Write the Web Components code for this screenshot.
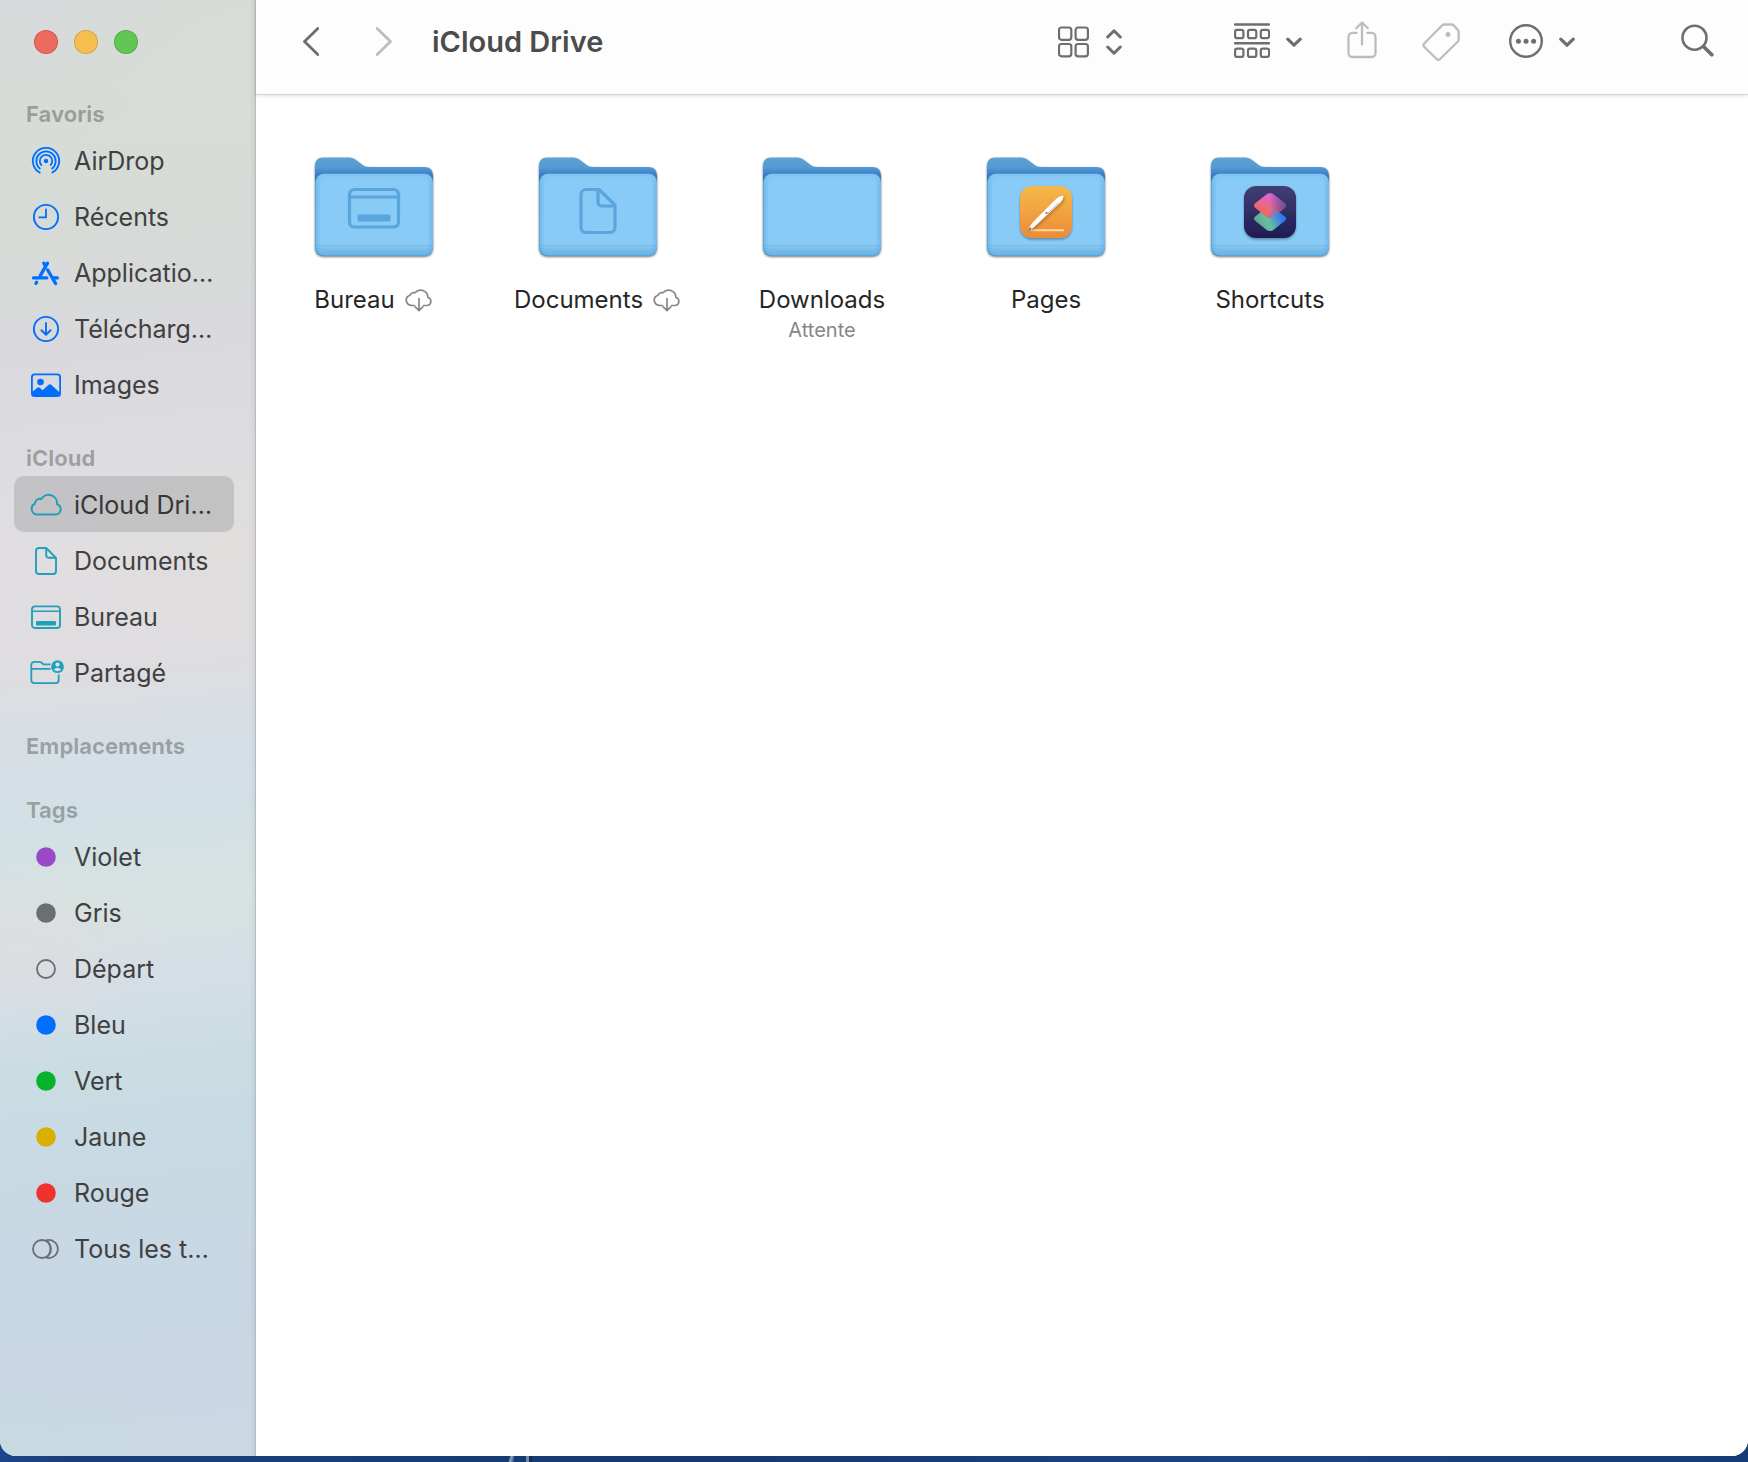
<!DOCTYPE html>
<html lang="fr">
<head>
<meta charset="utf-8">
<title>iCloud Drive</title>
<style>
  html, body { margin: 0; height: 100%; }
  body {
    font-family: Inter, "Liberation Sans", sans-serif;
    background:
      linear-gradient(105deg, transparent 20%, #8fa9bd 45%, #5d7fa3 70%, transparent) 508px 100% / 6px 6px no-repeat,
      linear-gradient(90deg, #6f8dab 0 50%, #122c52 50%) 526px 100% / 6px 6px no-repeat,
      linear-gradient(90deg, #1c468c 0, #1a3e78 4%, #17407a 15%, #16386e 40%, #1a4482 70%, #153c74 100%);
  }
</style>
</head>
<body>
<finder-window>
  <finder-sidebar slot="sidebar">
    <sidebar-section heading="Favoris">
      <sidebar-item icon="airdrop">AirDrop</sidebar-item>
      <sidebar-item icon="clock">Récents</sidebar-item>
      <sidebar-item icon="apps">Applicatio…</sidebar-item>
      <sidebar-item icon="download">Télécharg…</sidebar-item>
      <sidebar-item icon="image">Images</sidebar-item>
    </sidebar-section>
    <sidebar-section heading="iCloud">
      <sidebar-item icon="cloud" selected>iCloud Dri…</sidebar-item>
      <sidebar-item icon="doc">Documents</sidebar-item>
      <sidebar-item icon="desktop">Bureau</sidebar-item>
      <sidebar-item icon="shared">Partagé</sidebar-item>
    </sidebar-section>
    <sidebar-section heading="Emplacements"></sidebar-section>
    <sidebar-section heading="Tags">
      <sidebar-item icon="dot" style="--tint:#9a48c8">Violet</sidebar-item>
      <sidebar-item icon="dot" style="--tint:#6b6e75">Gris</sidebar-item>
      <sidebar-item icon="ring">Départ</sidebar-item>
      <sidebar-item icon="dot" style="--tint:#006fff">Bleu</sidebar-item>
      <sidebar-item icon="dot" style="--tint:#07b22d">Vert</sidebar-item>
      <sidebar-item icon="dot" style="--tint:#dab000">Jaune</sidebar-item>
      <sidebar-item icon="dot" style="--tint:#f0312d">Rouge</sidebar-item>
      <sidebar-item icon="alltags">Tous les t…</sidebar-item>
    </sidebar-section>
  </finder-sidebar>
  <finder-toolbar slot="toolbar">iCloud Drive</finder-toolbar>
  <finder-grid slot="content">
    <finder-file emblem="desktop" cloud>Bureau</finder-file>
    <finder-file emblem="doc" cloud>Documents</finder-file>
    <finder-file status="Attente">Downloads</finder-file>
    <finder-file emblem="pages">Pages</finder-file>
    <finder-file emblem="shortcuts">Shortcuts</finder-file>
  </finder-grid>
</finder-window>

<script>
const svg = (w, h, body, attrs = '') =>
  `<svg width="${w}" height="${h}" viewBox="0 0 ${w} ${h}" fill="none" stroke-linecap="round" stroke-linejoin="round" aria-hidden="true" ${attrs}>${body}</svg>`;

const BLUE = '#006fff', TEAL = '#229fb9', GREY = '#6b6e75';

/* Sidebar glyphs, drawn on a 36x32 board centred on (18,16). */
const side = {
  airdrop: `<g stroke="${BLUE}" stroke-width="1.8" stroke-linecap="butt">
    <path d="M12.4 28A13.2 13.2 0 1 1 23.6 28"/>
    <path d="M12.4 24A9.7 9.7 0 1 1 23.6 24"/>
    <path d="M13.8 20.6A6.2 6.2 0 1 1 22.2 20.6"/></g>
    <circle cx="18" cy="16" r="2.2" fill="${BLUE}"/>`,
  clock: `<circle cx="18" cy="16" r="12.1" stroke="${BLUE}" stroke-width="1.9"/><path d="M18 8.5V16.4H11.2" stroke="${BLUE}" stroke-width="1.8"/>`,
  apps: `<g stroke="${BLUE}" stroke-width="3.3">
    <path d="M19.5 6.2 12.3 18.6"/><path d="M15.8 6.2 17.4 8.8"/>
    <path d="M5.5 20.9H18.8"/><path d="M25.3 20.9H29.4"/>
    <path d="M19.7 13 27.6 26.5"/><path d="M8.6 25.3 7.9 26.4"/></g>`,
  download: `<circle cx="18" cy="16" r="12.1" stroke="${BLUE}" stroke-width="1.9"/><path d="M18 10V21.6M13.4 17.3 18 21.8 22.6 17.3" stroke="${BLUE}" stroke-width="1.9"/>`,
  image: `<path fill="${BLUE}" fill-rule="evenodd" d="M6.5 4.5h23a3.5 3.5 0 0 1 3.5 3.5v16.5a3.5 3.5 0 0 1-3.5 3.5h-23a3.5 3.5 0 0 1-3.5-3.5V8a3.5 3.5 0 0 1 3.5-3.5ZM7 6.3A2.2 2.2 0 0 0 4.8 8.5V22.5L9.3 18.7Q10.5 17.7 11.7 18.7L14.6 21.2 20.3 16Q21.9 14.7 23.5 16L31.2 23V8.5A2.2 2.2 0 0 0 29 6.3Z"/><circle cx="12.5" cy="13" r="3.3" fill="${BLUE}"/>`,
  cloud: `<path d="M8.800 25.500A5.700 5.700 0 0 1 6.900 14.700 5 5 0 0 1 13.200 10 8.500 8.500 0 0 1 29 15.200 5.300 5.300 0 0 1 28 25.500Z" stroke="${TEAL}" stroke-width="2"/>`,
  doc: `<path d="M18.2 3H11a3 3 0 0 0-3 3V26a3 3 0 0 0 3 3H25a3 3 0 0 0 3-3V12.8ZM18.2 3.2V10.3a2.5 2.5 0 0 0 2.5 2.5H27.8" stroke="${TEAL}" stroke-width="1.9"/>`,
  desktop: `<rect x="4" y="5.4" width="28" height="21.6" rx="3" stroke="${TEAL}" stroke-width="1.9"/><path d="M4 10.3H32" stroke="${TEAL}" stroke-width="1.5"/><rect x="8" y="20" width="20" height="4.4" rx="1.2" fill="${TEAL}"/>`,
  shared: `<path d="M22.5 7.3H15.4L13.3 5.5Q12.5 4.8 11.4 4.8H6.5A3.2 3.2 0 0 0 3.3 8V23a3.2 3.2 0 0 0 3.2 3.2H27.500A3.2 3.2 0 0 0 30.7 23V17.600M3.3 11.8H22.5" stroke="${TEAL}" stroke-width="1.8" stroke-linecap="butt"/><circle cx="29.5" cy="9.7" r="6.4" fill="${TEAL}"/><circle cx="29.5" cy="7.6" r="2.1" fill="#dfe2e4"/><path d="M25.7 12.8Q29.5 8.8 33.3 12.8Q29.5 15.6 25.7 12.8Z" fill="#dfe2e4"/>`,
  dot: `<circle cx="18" cy="16" r="9.8" style="fill:var(--tint)"/>`,
  ring: `<circle cx="18" cy="16" r="9" stroke="${GREY}" stroke-width="1.8"/>`,
  alltags: `<circle cx="14" cy="16" r="9" stroke="${GREY}" stroke-width="1.8"/><path d="M18.5 7.3A9 9 0 1 1 18.5 24.7A11.6 11.6 0 0 0 18.5 7.3" stroke="${GREY}" stroke-width="1.8"/>`
};

/* Toolbar glyphs */
const D = '#6e6e6e', L = '#bdbdbd';
const sq = (x, y, s, r, w) => `<rect x="${x}" y="${y}" width="${s}" height="${s}" rx="${r}" stroke="${D}" stroke-width="${w}"/>`;
const bar = {
  back: svg(16, 44, `<path d="M14.8 8.5 1.5 21.5 14.8 34.5" stroke="${D}" stroke-width="2.8"/>`),
  forward: svg(16, 44, `<path d="M1.2 8.5 14.5 21.5 1.2 34.5" stroke="${L}" stroke-width="2.8"/>`),
  icons: svg(32, 44, sq(1, 7.5, 12.3, 2.5, 2.2) + sq(17.6, 7.5, 12.3, 2.5, 2.2) + sq(1, 24, 12.3, 2.5, 2.2) + sq(17.6, 24, 12.3, 2.5, 2.2)),
  updown: svg(16, 44, `<path d="M1.7 17 8 10.8 14.3 17M1.7 27 8 33.2 14.3 27" stroke="${D}" stroke-width="3"/>`),
  group: svg(36, 44, `<path d="M1 4.500H35M1 23.300H35" stroke="${D}" stroke-width="2.4"/>` +
    [1.1, 14, 26.8].map(x => sq(x, 9.9, 8.3, 2, 2.2) + sq(x, 28.6, 8.3, 2, 2.2)).join('')),
  chevron: svg(16, 44, `<path d="M1.8 19.2 8 25.2 14.2 19.2" stroke="${D}" stroke-width="3.2"/>`),
  share: svg(30, 44, `<path d="M9.5 12.8H5.5A4 4 0 0 0 1.5 16.8V33A4 4 0 0 0 5.5 37H24.500A4 4 0 0 0 28.5 33V16.8A4 4 0 0 0 24.5 12.8H20.5M15 24.500V3M9.2 8.3 15 2.5 20.8 8.3" stroke="${L}" stroke-width="2.3"/>`),
  tag: svg(38, 44, `<path d="M20 5.500Q21 4.500 22.3 4.500H29.500Q30.8 4.500 31.7 5.4L35.6 9.6Q36.6 10.500 36.6 11.8V19.500Q36.6 20.8 35.7 21.7L18.3 38.800Q16.3 40.600 14.3 38.800L2.4 27Q.6 25.2 2.4 23.2Z" stroke="${L}" stroke-width="2.3"/><circle cx="26" cy="14.5" r="2.5" fill="${L}"/>`),
  more: svg(34, 44, `<circle cx="17" cy="21" r="15.8" stroke="${D}" stroke-width="2.4"/><g fill="${D}"><circle cx="9.4" cy="21.2" r="2.5"/><circle cx="17" cy="21.2" r="2.5"/><circle cx="24.6" cy="21.2" r="2.5"/></g>`),
  search: svg(33, 44, `<circle cx="13.5" cy="17.7" r="12" stroke="${D}" stroke-width="2.6"/><path d="M22.5 26.5 30.8 34.8" stroke="${D}" stroke-width="3.7"/>`)
};

/* Folder emblems, in the folder's own 126x108 board (folder body spans x 4-122). */
const emblem = {
  desktop: `<g stroke="#5ba5de" fill="none"><rect x="38.5" y="36.500" width="49" height="37.500" rx="5" stroke-width="3.2"/><path d="M38 44H88" stroke-width="3"/></g><rect x="46.5" y="61.500" width="33" height="7" rx="1.5" fill="#5ba5de"/>`,
  doc: `<path d="M64 36.500H51a5 5 0 0 0-5 5V74.500a5 5 0 0 0 5 5H75a5 5 0 0 0 5-5V52ZM63 37.500V49.500a3.500 3.500 0 0 0 3.500 3.500H79" fill="none" stroke="#5ba5de" stroke-width="3.2"/>`,
  pages: `<defs><linearGradient id="or" x2="0" y2="1"><stop stop-color="#f5b94a"/><stop offset="1" stop-color="#ee8b38"/></linearGradient></defs>
    <rect x="37" y="33" width="52" height="52" rx="12" fill="url(#or)" filter="url(#lift)"/>
    <path d="M47 77.3H81" stroke="#fbd9a0" stroke-width="2" stroke-linecap="butt"/>
    <path d="M45 77.6C46 73.500 49.500 69.500 54 65L72.5 46.500C75.5 43.500 79 42 80 43 81 44 79.500 47.500 76.5 50.300L57 68.500C52.5 73 49 76 45 77.6Z" fill="#fff" filter="url(#pen)"/>
    <path d="M44.800 77.900 47 74.200 48.500 75.700Z" fill="#55504a"/><circle cx="63.500" cy="60" r="1.1" fill="#777"/><path d="M64.5 60.5 75.5 49.8" stroke="#bbb" stroke-width="1"/>`,
  shortcuts: `<defs><linearGradient id="nv" x2="0" y2="1"><stop stop-color="#403f73"/><stop offset="1" stop-color="#201c54"/></linearGradient>
    <linearGradient id="lo" x1="0" y1=".7" x2="1" y2=".4"><stop stop-color="#5f9f98"/><stop offset=".45" stop-color="#66c09c"/><stop offset=".85" stop-color="#3478f6"/></linearGradient>
    <linearGradient id="up" x1=".2" y1=".75" x2=".6" y2=".1"><stop stop-color="#f0685a"/><stop offset=".55" stop-color="#e4689c"/><stop offset="1" stop-color="#d964d0"/></linearGradient>
    <linearGradient id="ur" x1=".5" y1="0" x2="1" y2="0"><stop stop-color="#4a4478" stop-opacity="0"/><stop offset="1" stop-color="#5b4a86" stop-opacity=".9"/></linearGradient></defs>
    <rect x="37" y="33" width="52" height="52" rx="12" fill="url(#nv)" filter="url(#lift)"/>
    <path d="M59 55Q63 51.800 67 55L77.5 63.200Q80.5 65.600 77.5 68L67 76.500Q63 79.700 59 76.500L48.5 68Q45.5 65.600 48.5 63.200Z" fill="url(#lo)"/>
    <path d="M59 41.700Q63 38.500 67 41.700L77.5 50Q80.5 52.500 77.5 55L67 63.500Q63 66.700 59 63.500L48.5 55Q45.5 52.500 48.5 50Z" fill="url(#up)"/>
    <path d="M59 41.700Q63 38.500 67 41.700L77.5 50Q80.5 52.500 77.5 55L67 63.500Q63 66.700 59 63.500L48.5 55Q45.5 52.500 48.5 50Z" fill="url(#ur)"/>
    <path d="M72 59.400 67 63.500Q63 66.700 60.500 64.500L66 56.500Z" fill="#6f86dc" opacity=".6"/>`
};

const folder = kind => svg(126, 108, `
  <defs>
    <linearGradient id="bk" x2="0" y2="1"><stop stop-color="#5ca2d6"/><stop offset=".1" stop-color="#549bd3"/><stop offset=".2" stop-color="#2e76c2"/><stop offset="1" stop-color="#3a80c8"/></linearGradient>
    <linearGradient id="fr" x2="0" y2="1"><stop stop-color="#7fc4f1"/><stop offset=".08" stop-color="#88cbf6"/><stop offset=".86" stop-color="#88cbf6"/><stop offset=".875" stop-color="#78bdec"/><stop offset=".89" stop-color="#83c6f2"/><stop offset=".92" stop-color="#79beec"/><stop offset="1" stop-color="#67b0e2"/></linearGradient>
    <linearGradient id="ed" x2="1" y2="0"><stop stop-color="#5da9de" stop-opacity=".55"/><stop offset=".05" stop-color="#5da9de" stop-opacity="0"/><stop offset=".95" stop-color="#5da9de" stop-opacity="0"/><stop offset="1" stop-color="#5da9de" stop-opacity=".55"/></linearGradient>
    <filter id="drop" x="-10%" y="-10%" width="120%" height="125%"><feDropShadow dx="0" dy="1" stdDeviation="1.2" flood-color="#000" flood-opacity=".55"/></filter>
    <filter id="lift" x="-20%" y="-20%" width="140%" height="150%"><feDropShadow dx="0" dy="1.5" stdDeviation="1" flood-color="#20405c" flood-opacity=".5"/></filter>
    <filter id="pen" x="-20%" y="-20%" width="150%" height="150%"><feDropShadow dx="1.5" dy="1.5" stdDeviation="1.5" flood-color="#8a4a10" flood-opacity=".5"/></filter>
  </defs>
  <path filter="url(#drop)" fill="url(#bk)" d="M12 4.500H38C41 4.500 43 5.500 45 7L51 11.500C53 13.200 55 14 58 14H113.500Q122 14 122 23V94Q122 103 113 103H13Q4 103 4 94V13Q4 4.500 12 4.500Z"/>
  <rect x="4.5" y="20.8" width="117.5" height="82" rx="8.5" fill="url(#fr)"/>
  <rect x="4.5" y="20.8" width="117.5" height="82" rx="8.5" fill="url(#ed)"/>
  ${emblem[kind] || ''}`);

const cloudDown = svg(30, 24, `<path d="M10.5 17.500H8.500A6 5.3 0 0 1 6 7.3 4 4 0 0 1 11 4.800 7.2 7.2 0 0 1 23.8 9.2 4.3 4.3 0 0 1 23.5 17.500H19.500M15 10.500V22.300M11.2 18.800 15 22.600 18.8 18.800" stroke="#868686" stroke-width="1.7"/>`);

class Base extends HTMLElement {
  constructor() { super(); this.attachShadow({ mode: 'open' }); }
  connectedCallback() { this.shadowRoot.innerHTML = this.render(); }
}

customElements.define('finder-window', class extends Base {
  render() {
    return `<style>
      :host { display: flex; height: calc(100vh - 6px); overflow: hidden; background: #fff; border-radius: 0 0 16px 16px; }
      .main { flex: 1; min-width: 0; display: flex; flex-direction: column; background: #fff; }
    </style>
    <slot name="sidebar"></slot>
    <div class="main"><slot name="toolbar"></slot><slot name="content"></slot></div>`;
  }
});

customElements.define('finder-sidebar', class extends Base {
  render() {
    return `<style>
      :host { display: block; flex: none; width: 256px; box-sizing: border-box; border-right: 1px solid #b9bcbd;
        background:
          linear-gradient(90deg, transparent 98%, rgba(0,0,0,.05)),
          radial-gradient(220px 130px at 100% 60px, #d8ddd6, transparent),
          radial-gradient(180px 130px at 100% 540px, rgba(222,220,214,.5), transparent),
          radial-gradient(160px 90px at 20px 950px, rgba(221,221,223,.8), transparent),
          radial-gradient(200px 60px at 0 1440px, rgba(200,219,222,.5), transparent),
          linear-gradient(174deg, #d6dadb 0, #d7dcd6 10%, #d7dad8 19%, #dad9de 25%, #dddce1 32%, #e1dee1 38%, #dfdde0 45%, #d5dfe5 52%, #d2e0e5 56%, #d8e2e1 62%, #d5dee6 67%, #c9dde2 73%, #c8d9e3 79%, #c8d7e4 88%, #c9d8e3 100%); }
      .lights { display: flex; gap: 16px; padding: 30px 34px 42px; }
      button { width: 24px; height: 24px; padding: 0; border-radius: 50%; border: 1px solid rgba(0,0,0,.14); background: var(--c); }
      nav { display: flex; flex-direction: column; gap: 28px; padding: 0 21px 0 14px; }
    </style>
    <div class="lights">
      <button aria-label="Fermer" style="--c:#ed6a5f"></button><button aria-label="Réduire" style="--c:#f5bf4f"></button><button aria-label="Agrandir" style="--c:#62c655"></button>
    </div>
    <nav><slot></slot></nav>`;
  }
});

customElements.define('sidebar-section', class extends Base {
  render() {
    return `<style>
      :host { display: block; }
      h2 { margin: 0; padding-left: 12px; font-size: 22px; line-height: 36px; font-weight: 700; color: rgba(0,0,0,.28); }
    </style><h2>${this.getAttribute('heading')}</h2><slot></slot>`;
  }
});

customElements.define('sidebar-item', class extends Base {
  render() {
    return `<style>
      :host { display: block; }
      a { display: flex; align-items: center; gap: 10px; height: 56px; box-sizing: border-box; padding: 2px 0 0 14px; border-radius: 10px; color: #3f4041; text-decoration: none; font-size: 25px; white-space: nowrap; }
      :host([selected]) a { background: rgba(0,0,0,.12); color: #363637; }
      svg { flex: none; overflow: visible; }
    </style><a href="#">${svg(36, 32, side[this.getAttribute('icon')])}<span><slot></slot></span></a>`;
  }
});

customElements.define('finder-toolbar', class extends Base {
  render() {
    return `<style>
      :host { display: flex; align-items: flex-start; justify-content: space-between; height: 95px; box-sizing: border-box; padding: 20px 34px 0 47px; background: #fdfdfd; border-bottom: 1px solid #d4d4d4; box-shadow: 0 1px 4px rgba(0,0,0,.12); z-index: 1; }
      div { display: flex; align-items: center; }
      button { display: flex; align-items: center; gap: 16px; height: 44px; padding: 0; border: 0; background: none; }
      .nav { gap: 57px; }
      h1 { margin: 0; padding-left: 40px; font-size: 29px; line-height: 44px; font-weight: 600; color: #4c4c4c; white-space: nowrap; }
      .view { margin-right: 112px; }
      .share { margin: 0 45px; }
      .more { margin-left: 49px; margin-right: 106px; }
    </style>
    <div>
      <div class="nav"><button aria-label="Précédent">${bar.back}</button><button aria-label="Suivant">${bar.forward}</button></div>
      <h1><slot></slot></h1>
    </div>
    <div>
      <button class="view" aria-label="Présentation">${bar.icons}${bar.updown}</button>
      <button aria-label="Grouper">${bar.group}${bar.chevron}</button>
      <button class="share" aria-label="Partager">${bar.share}</button>
      <button aria-label="Tags">${bar.tag}</button>
      <button class="more" aria-label="Plus">${bar.more}${bar.chevron}</button>
      <button aria-label="Rechercher">${bar.search}</button>
    </div>`;
  }
});

customElements.define('finder-grid', class extends Base {
  render() {
    return `<style>
      :host { display: grid; grid-template-columns: repeat(auto-fill, 224px); padding: 58px 0 0 6px; }
    </style><slot></slot>`;
  }
});

customElements.define('finder-file', class extends Base {
  render() {
    const status = this.getAttribute('status');
    return `<style>
      :host { display: flex; flex-direction: column; align-items: center; }
      .name { display: flex; align-items: center; gap: 9px; margin-top: 23px; font-size: 24px; line-height: 32px; color: #262626; }
      .status { font-size: 20px; line-height: 28px; color: #868686; }
      svg { display: block; }
    </style>${folder(this.getAttribute('emblem'))}
    <div class="name"><slot></slot>${this.hasAttribute('cloud') ? cloudDown : ''}</div>
    ${status ? `<div class="status">${status}</div>` : ''}`;
  }
});
</script>
</body>
</html>
